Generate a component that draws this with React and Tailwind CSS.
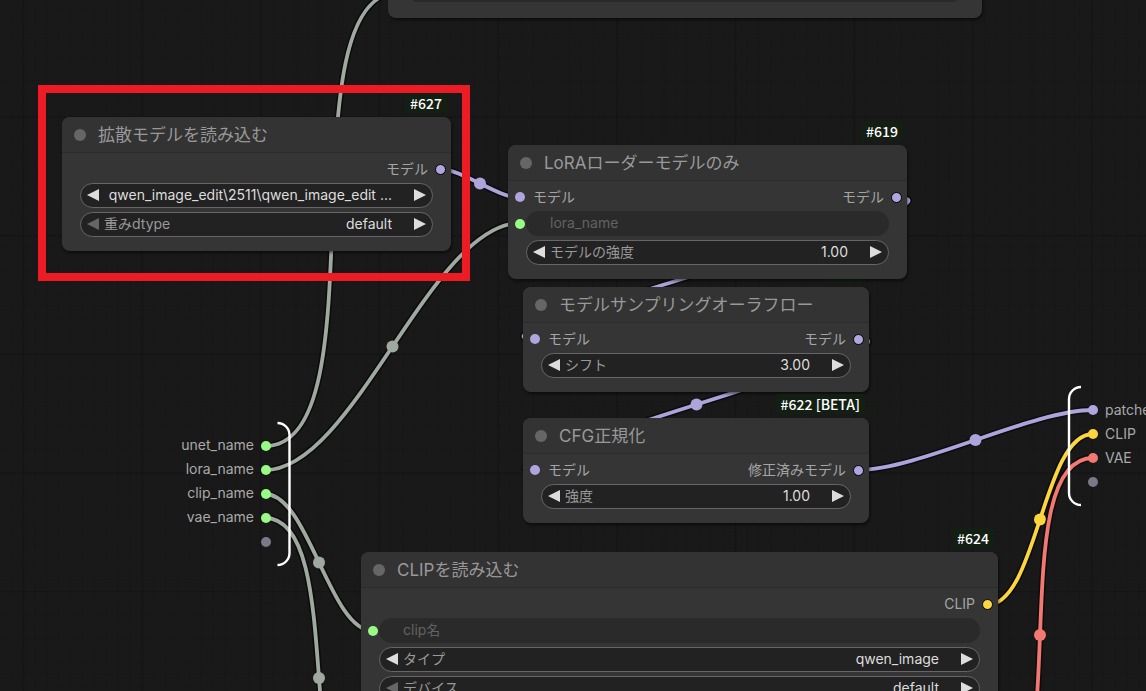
import React, { useId, useState } from 'react';
import clsx from 'clsx';

const COLORS = {
  model: '#aea3db',
  clip: '#fcd53f',
  vae: '#f27871',
  string: '#9fa99f',
};

const links = [
  { from: [265, 446], to: [400, -8], type: 'string' },
  { from: [265, 470], to: [520, 223], type: 'string' },
  { from: [265, 494], to: [373, 631], type: 'string' },
  { from: [265, 518], to: [373, 838], type: 'string' },
  { from: [440, 169], to: [520, 198], type: 'model' },
  { from: [897, 198], to: [535, 339], type: 'model' },
  { from: [858, 339], to: [535, 470], type: 'model' },
  { from: [858, 470], to: [1093, 410], type: 'model' },
  { from: [987, 605], to: [1093, 434], type: 'clip' },
  { from: [987, 812], to: [1093, 458], type: 'vae' },
];

const dotClasses = {
  model: 'bg-[#b1a5df]',
  clip: 'bg-[#fcd53f]',
  vae: 'bg-[#f27871]',
  string: 'bg-[#98fb85]',
  empty: 'bg-[#7b7889]',
};

const Link = ({ from, to, type }) => {
  const [x1, y1] = from;
  const [x2, y2] = to;
  // control points sit a quarter of the distance away from each end
  const offset = Math.hypot(x2 - x1, y2 - y1) * 0.25;
  const d = `M${x1} ${y1} C${x1 + offset} ${y1} ${x2 - offset} ${y2} ${x2} ${y2}`;

  return (
    <g fill="none">
      <path d={d} stroke="#000" strokeOpacity="0.5" strokeWidth="7" />
      <path d={d} stroke={COLORS[type]} strokeWidth="3.8" />
      <circle cx={(x1 + x2) / 2} cy={(y1 + y2) / 2} r="6" fill={COLORS[type]} />
    </g>
  );
};

const CanvasBackground = () => (
  <svg className="absolute inset-0 h-full w-full" aria-hidden="true">
    <defs>
      <pattern id="grid-minor" x="22.6" y="-2.6" width="11.87" height="11.87" patternUnits="userSpaceOnUse">
        <path d="M0.5 0V12M0 0.5H12" stroke="#161616" strokeWidth="0.5" />
      </pattern>
      <pattern id="grid-major" x="22.6" y="-2.6" width="118.7" height="118.7" patternUnits="userSpaceOnUse">
        <path d="M0.8 0V119M0 0.8H119" stroke="#131313" strokeWidth="1.3" />
      </pattern>
    </defs>
    <rect width="100%" height="100%" fill="url(#grid-minor)" />
    <rect width="100%" height="100%" fill="url(#grid-major)" />
    {links.map((link, i) => (
      <Link key={i} {...link} />
    ))}
  </svg>
);

const Dot = ({ type, outlined }) => (
  <span
    className={clsx(
      'block shrink-0 rounded-full',
      dotClasses[type],
      outlined ? 'size-[11px] border border-black' : 'size-[10px]'
    )}
  />
);

const Arrow = ({ left, dim, label, onClick }) => (
  <button type="button" aria-label={label} onClick={onClick} className="shrink-0">
    <svg width="12" height="12" viewBox="0 0 12 12" className={dim ? 'fill-[#666]' : 'fill-[#ddd]'}>
      <path d={left ? 'M12 0V12L0 6Z' : 'M0 0V12L12 6Z'} />
    </svg>
  </button>
);

const Widget = ({ label, value, kind = 'combo', first, name }) => {
  const id = useId();
  const [current, setCurrent] = useState(value);

  const step = (amount) => {
    if (kind === 'number') setCurrent((Number(current) + amount).toFixed(2));
  };

  if (kind === 'linked') {
    return (
      <div className="flex items-center pr-[18px]">
        <span className="flex w-[18px] shrink-0 justify-center pl-1.5">
          <Dot type="string" />
        </span>
        <div className="flex h-[25px] flex-1 items-center rounded-full bg-[#2a2a2a] pb-0.5 pl-6 text-[#626262]">
          <label htmlFor={id}>{label}</label>
          <input id={id} disabled className="min-w-0 flex-1 bg-transparent" />
        </div>
      </div>
    );
  }

  return (
    <div className="px-[18px]">
      <div className="flex h-[25px] items-center rounded-full border border-[#666] bg-[#222] px-1.5 pb-0.5">
        <Arrow left dim={first} label="前へ" onClick={() => step(-0.01)} />
        {label && (
          <label htmlFor={id} className="ml-[5px] shrink-0 text-[#999]">
            {label}
          </label>
        )}
        {kind === 'combo' ? (
          <select
            id={id}
            aria-label={label ? undefined : name}
            defaultValue={value}
            className="mr-[22px] ml-1 min-w-0 flex-1 appearance-none bg-transparent text-right text-[#ddd] outline-none"
          >
            <option>{value}</option>
          </select>
        ) : (
          <input
            id={id}
            value={current}
            onChange={(e) => setCurrent(e.target.value)}
            className="mr-[22px] ml-1 min-w-0 flex-1 bg-transparent text-right text-[#ddd] outline-none"
          />
        )}
        <Arrow label="次へ" onClick={() => step(0.01)} />
      </div>
    </div>
  );
};

const Node = ({ className, title, badge, input, output, outputType = 'model', children }) => (
  <section
    className={clsx(
      'absolute rounded-lg bg-[#353535] pb-3.5 shadow-[1px_2px_3px_rgba(0,0,0,0.5)]',
      className
    )}
  >
    <span className="absolute right-1 bottom-full mb-1 h-5 rounded-xs bg-[#141f14] px-[5px] font-['Noto_Sans_CJK_JP',sans-serif] text-sm leading-5 font-medium whitespace-nowrap text-white">
      {badge}
    </span>
    <header className="flex h-9 items-center gap-3 rounded-t-lg border-b border-[#2c2c2c] bg-[#333] px-3">
      <span className="size-3 shrink-0 rounded-full bg-[#666]" />
      <h2 className="pt-px text-[17px] whitespace-nowrap text-[#999]">{title}</h2>
    </header>
    <div className="flex h-[30px] items-center pt-0.5 pr-[5px] pl-[7px] text-[#a5a5a5]">
      {input && (
        <div className="flex items-center gap-2">
          <Dot type="model" />
          <span>{input}</span>
        </div>
      )}
      <div className="ml-auto flex items-center gap-[7px]">
        <span>{output}</span>
        <Dot type={outputType} outlined />
      </div>
    </div>
    <div className="flex flex-col gap-1">{children}</div>
  </section>
);

const App = () => {
  const sources = ['unet_name', 'lora_name', 'clip_name', 'vae_name'];
  const results = [
    { name: 'patched', type: 'model' },
    { name: 'CLIP', type: 'clip' },
    { name: 'VAE', type: 'vae' },
  ];

  return (
    <main className="relative h-screen w-full overflow-hidden bg-[#191919] font-[Inter,'Noto_Sans_CJK_JP',sans-serif] text-sm">
      <CanvasBackground />

      {/* bottom edge of the node above */}
      <section className="absolute -top-10 left-[388px] w-[594px] rounded-lg bg-[#353535] px-[18px] pt-[17px] pb-4 shadow-[1px_2px_3px_rgba(0,0,0,0.5)]">
        <div className="h-[25px] rounded-full bg-[#2a2a2a]" />
      </section>

      {/* subgraph inputs */}
      <ul className="absolute top-[434px] left-[180px] flex w-[91px] flex-col text-[#aaa]">
        {sources.map((name) => (
          <li key={name} className="flex h-6 items-center justify-end gap-[7px]">
            <span className="pb-0.5">{name}</span>
            <Dot type="string" />
          </li>
        ))}
        <li className="flex h-6 items-center justify-end">
          <Dot type="empty" />
        </li>
      </ul>
      <svg className="absolute top-[421px] left-[276px]" width="16" height="146" fill="none" stroke="#fff" strokeWidth="2.4">
        <path d="M1.5 2A12 12 0 0 1 13.5 14V132A12 12 0 0 1 1.5 144" />
      </svg>

      {/* subgraph outputs */}
      <svg className="absolute top-[385px] left-[1067px]" width="16" height="122" fill="none" stroke="#fff" strokeWidth="2.4">
        <path d="M14 2A12 12 0 0 0 2 14V108A12 12 0 0 0 14 120" />
      </svg>
      <ul className="absolute top-[398px] left-[1088px] flex flex-col text-[#aaa]">
        {results.map(({ name, type }) => (
          <li key={name} className="flex h-6 items-center gap-[7px]">
            <Dot type={type} />
            <span>{name}</span>
          </li>
        ))}
        <li className="flex h-6 items-center">
          <Dot type="empty" />
        </li>
      </ul>

      <Node
        className="top-[287px] left-[523px] w-[346px]"
        title="モデルサンプリングオーラフロー"
        badge="#621"
        input="モデル"
        output="モデル"
      >
        <Widget kind="number" label="シフト" value="3.00" />
      </Node>

      <Node
        className="top-[418px] left-[523px] w-[346px]"
        title="CFG正規化"
        badge="#622 [BETA]"
        input="モデル"
        output="修正済みモデル"
      >
        <Widget kind="number" label="強度" value="1.00" />
      </Node>

      <Node
        className="top-[145px] left-[508px] w-[399px]"
        title="LoRAローダーモデルのみ"
        badge="#619"
        input="モデル"
        output="モデル"
      >
        <Widget kind="linked" label="lora_name" />
        <Widget kind="number" label="モデルの強度" value="1.00" />
      </Node>

      <Node
        className="top-[117px] left-[62px] w-[389px]"
        title="拡散モデルを読み込む"
        badge="#627"
        output="モデル"
      >
        <Widget name="モデル名" value="qwen_image_edit\2511\qwen_image_edit ..." />
        <Widget label="重みdtype" value="default" first />
      </Node>

      <Node
        className="top-[552px] left-[361px] w-[637px]"
        title="CLIPを読み込む"
        badge="#624"
        output="CLIP"
        outputType="clip"
      >
        <Widget kind="linked" label="clip名" />
        <Widget label="タイプ" value="qwen_image" />
        <Widget label="デバイス" value="default" first />
      </Node>

      <div className="pointer-events-none absolute top-[85px] left-[38px] h-[196px] w-[432px] border-8 border-[#ed1c24]" />
    </main>
  );
};

export default App;
